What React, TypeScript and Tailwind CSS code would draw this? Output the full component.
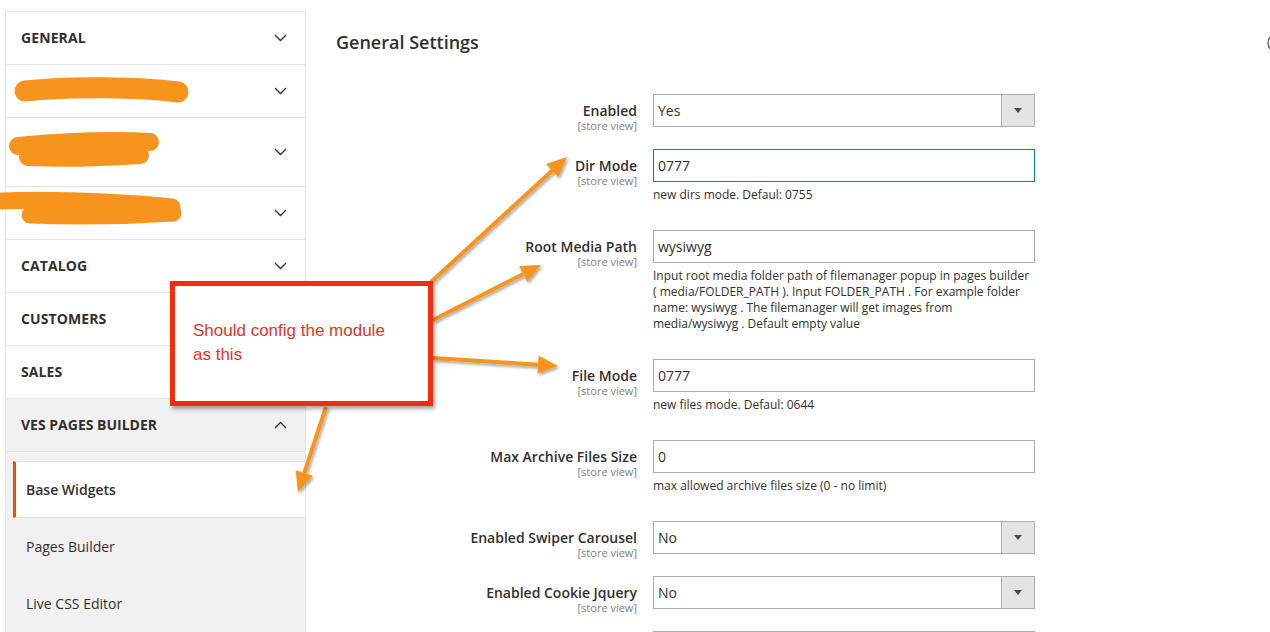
import React from "react";

function Chevron({ up = false }: { up?: boolean }) {
  return (
    <svg width="13" height="8" viewBox="0 0 13 8" className="shrink-0">
      <path
        d={up ? "M1 7 L6.5 1.5 L12 7" : "M1 1 L6.5 6.5 L12 1"}
        fill="none"
        stroke="#303030"
        strokeWidth="1.3"
      />
    </svg>
  );
}

function NavRow({ label, h = "h-[53px]" }: { label?: string; h?: string }) {
  return (
    <div className={`${h} flex items-center justify-between pl-[15px] pr-[18px] pb-[1px] border-b border-[#e3e3e3]`}>
      <span className="text-[14px] font-bold text-[#303030] tracking-[0.1px]">{label}</span>
      <Chevron />
    </div>
  );
}

function Field({
  label,
  children,
  note,
  scope = true,
}: {
  label: string;
  children: React.ReactNode;
  note?: string;
  scope?: boolean;
}) {
  return (
    <div className="flex items-start mb-[22px]">
      <div className="w-[301px] h-[33px] text-right pt-[8px] shrink-0">
        <div className="text-[14px] leading-[18px] font-semibold text-[#303030]">{label}</div>
        {scope && (
          <div className="text-[11px] leading-[12px] text-[#808080]">[store view]</div>
        )}
      </div>
      <div className="ml-[16px] w-[382px]">
        {children}
        {note && (
          <div className="mt-[5px] mb-[5px] text-[12px] leading-[16px] text-[#303030]">{note}</div>
        )}
      </div>
    </div>
  );
}

function TextInput({ value, focus = false }: { value: string; focus?: boolean }) {
  return (
    <div
      className={`h-[33px] flex items-center px-[4px] text-[14px] text-[#303030] bg-white border ${
        focus ? "border-[#007bdb]" : "border-[#adadad]"
      }`}
    >
      {value}
    </div>
  );
}

function Select({ value }: { value: string }) {
  return (
    <div className="h-[33px] flex items-stretch border border-[#adadad] bg-white">
      <div className="flex-1 flex items-center px-[4px] text-[14px] text-[#303030]">{value}</div>
      <div className="w-[33px] flex items-center justify-center bg-[#e3e3e3] border-l border-[#adadad]">
        <svg width="8" height="5" viewBox="0 0 8 5">
          <path d="M0 0 L8 0 L4 5 Z" fill="#514943" />
        </svg>
      </div>
    </div>
  );
}

function arrow(ax: number, ay: number, tx: number, ty: number) {
  const dx = tx - ax;
  const dy = ty - ay;
  const len = Math.hypot(dx, dy);
  const ux = dx / len;
  const uy = dy / len;
  const bx = tx - 20 * ux;
  const by = ty - 20 * uy;
  const px = -uy;
  const py = ux;
  const pts = `${tx},${ty} ${bx + 9 * px},${by + 9 * py} ${bx - 9 * px},${by - 9 * py}`;
  return { line: `M${ax} ${ay} L${bx} ${by}`, pts };
}

export default function App() {
  const arrows = [
    arrow(431, 282, 567, 157),
    arrow(433, 320, 541, 265),
    arrow(433, 358, 558, 366),
    arrow(326, 407, 298, 492),
  ];
  return (
    <div className="relative w-[1270px] h-[632px] overflow-hidden bg-white font-['Open_Sans',sans-serif] text-[#303030]">
      <div className="flex">
        <aside className="ml-[5px] mt-[11px] w-[301px] shrink-0 border-x border-t border-[#e3e3e3]">
          <NavRow label="GENERAL" />
          <NavRow label="" />
          <NavRow label="" h="h-[69px]" />
          <NavRow label="" />
          <NavRow label="CATALOG" />
          <NavRow label="CUSTOMERS" />
          <NavRow label="SALES" />
          <div className="h-[53px] flex items-center justify-between pl-[15px] pr-[18px] pb-[1px] border-b border-[#e3e3e3] bg-[#f1f1f1]">
            <span className="text-[14px] font-bold text-[#303030]">VES PAGES BUILDER</span>
            <Chevron up />
          </div>
          <div className="bg-[#f1f1f1] pl-[7px] pt-[9px] pb-[20px]">
            <div className="h-[57px] flex items-center bg-white border-l-[3px] border-[#eb5202] border-y border-y-[#e3e3e3] pl-[10px] text-[14px] font-semibold text-[#303030]">
              Base Widgets
            </div>
            <div className="h-[57px] flex items-center pl-[13px] text-[14px] text-[#303030]">
              Pages Builder
            </div>
            <div className="h-[57px] flex items-center pl-[13px] text-[14px] text-[#303030]">
              Live CSS Editor
            </div>
          </div>
        </aside>

        <main className="flex-1 pl-[30px]">
          <h1 className="mt-[31px] text-[18px] leading-[22px] font-semibold text-[#303030]">
            General Settings
          </h1>
          <div className="mt-[41px]">
            <Field label="Enabled">
              <Select value="Yes" />
            </Field>
            <Field label="Dir Mode" note="new dirs mode. Defaul: 0755">
              <TextInput value="0777" focus />
            </Field>
            <Field
              label="Root Media Path"
              note="Input root media folder path of filemanager popup in pages builder ( media/FOLDER_PATH ). Input FOLDER_PATH . For example folder name: wysiwyg . The filemanager will get images from media/wysiwyg . Default empty value"
            >
              <TextInput value="wysiwyg" />
            </Field>
            <Field label="File Mode" note="new files mode. Defaul: 0644">
              <TextInput value="0777" />
            </Field>
            <Field label="Max Archive Files Size" note="max allowed archive files size (0 - no limit)">
              <TextInput value="0" />
            </Field>
            <Field label="Enabled Swiper Carousel">
              <Select value="No" />
            </Field>
            <Field label="Enabled Cookie Jquery">
              <Select value="No" />
            </Field>
            <Field label="" scope={false}>
              <Select value="" />
            </Field>
          </div>
        </main>
      </div>

      {/* annotation overlay */}
      <svg className="absolute inset-0 pointer-events-none" width="1270" height="632">
        <defs>
          <filter id="sh" x="-20%" y="-20%" width="140%" height="140%">
            <feDropShadow dx="1.5" dy="2" stdDeviation="1.5" floodColor="#000" floodOpacity="0.35" />
          </filter>
        </defs>
        <g stroke="#f7941d" strokeLinecap="round" fill="none">
          <path d="M25 91 C70 86, 140 87, 178 92" strokeWidth="21" />
          <path d="M18 146 C60 142, 110 140, 150 142" strokeWidth="18" />
          <path d="M28 157 C70 159, 110 157, 140 155" strokeWidth="18" />
          <path d="M0 201 C60 199, 120 202, 172 207" strokeWidth="17" />
          <path d="M30 215 C80 217, 130 216, 173 213" strokeWidth="17" />
        </g>
        <g filter="url(#sh)">
          {arrows.map((a, i) => (
            <g key={i}>
              <path d={a.line} stroke="#f7941d" strokeWidth="4" fill="none" />
              <polygon points={a.pts} fill="#f7941d" />
            </g>
          ))}
        </g>
        <circle cx="1277" cy="43" r="9" fill="none" stroke="#555" strokeWidth="1.3" />
      </svg>

      <div className="absolute left-[170px] top-[281px] w-[263px] h-[125px] bg-white border-[5px] border-[#f42c0a] shadow-[2px_3px_4px_rgba(0,0,0,0.35)] pl-[18px] pt-[33px]">
        <div className="font-['Liberation_Sans',Arial,sans-serif] text-[17px] leading-[24px] text-[#e8321f]">
          Should config the module
          <br />
          as this
        </div>
      </div>
    </div>
  );
}
